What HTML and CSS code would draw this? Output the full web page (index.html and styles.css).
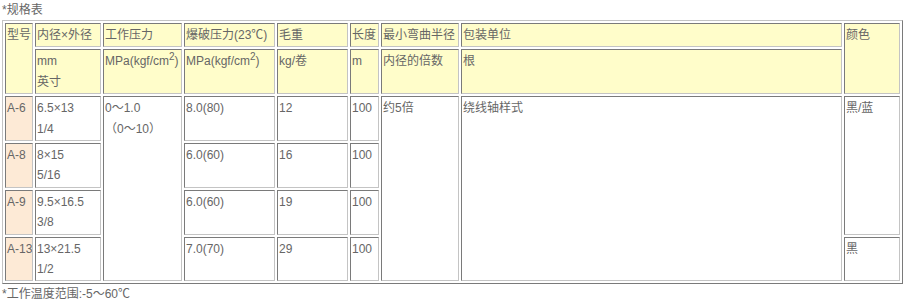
FILE: index.html
```html
<!DOCTYPE html>
<html lang="zh-CN">
<head>
<meta charset="utf-8">
<link rel="stylesheet" href="styles.css">
</head>
<body>
<div class="wrap">
  <div class="note">*规格表</div>
  <table class="spec">
    <tr class="head">
      <td class="w1" rowspan="2">型号</td>
      <td class="w2">内径×外径</td>
      <td class="w3">工作压力</td>
      <td class="w4">爆破压力(23℃)</td>
      <td class="w5">毛重</td>
      <td class="w6">长度</td>
      <td class="w7">最小弯曲半径</td>
      <td class="w8">包装单位</td>
      <td class="w9" rowspan="2">颜色</td>
    </tr>
    <tr class="head">
      <td>mm<br>英寸</td>
      <td>MPa(kgf/cm<sup>2</sup>)</td>
      <td>MPa(kgf/cm<sup>2</sup>)</td>
      <td>kg/卷</td>
      <td>m</td>
      <td>内径的倍数</td>
      <td>根</td>
    </tr>
    <tr>
      <td class="model">A-6</td>
      <td>6.5×13<br>1/4</td>
      <td rowspan="4">0～1.0<br>（0～10）</td>
      <td>8.0(80)</td>
      <td>12</td>
      <td>100</td>
      <td rowspan="4">约5倍</td>
      <td rowspan="4">绕线轴样式</td>
      <td rowspan="3">黑/蓝</td>
    </tr>
    <tr>
      <td class="model">A-8</td>
      <td>8×15<br>5/16</td>
      <td>6.0(60)</td>
      <td>16</td>
      <td>100</td>
    </tr>
    <tr>
      <td class="model">A-9</td>
      <td>9.5×16.5<br>3/8</td>
      <td>6.0(60)</td>
      <td>19</td>
      <td>100</td>
    </tr>
    <tr>
      <td class="model">A-13</td>
      <td>13×21.5<br>1/2</td>
      <td>7.0(70)</td>
      <td>29</td>
      <td>100</td>
      <td>黑</td>
    </tr>
  </table>
  <div class="note">*工作温度范围:-5～60℃</div>
</div>
</body>
</html>
```

FILE: styles.css
```css
html, body {
  margin: 0;
  padding: 0;
  background: #ffffff;
}
body {
  font-family: "Liberation Sans", "Noto Sans CJK SC", sans-serif;
  font-size: 12px;
  line-height: 20.4px;
  color: #666666;
}
.wrap {
  padding-left: 2px;
}
.note {
  height: 20px;
  line-height: 20px;
}
.spec {
  width: 901px;
  table-layout: fixed;
  border-collapse: separate;
  border-spacing: 2px;
  border-style: solid;
  border-width: 1px;
  border-color: #c4c4c4 #7a7a7a #7a7a7a #c4c4c4;
  margin: 0;
}
.spec td {
  box-sizing: border-box;
  padding: 1px;
  vertical-align: top;
  border-style: solid;
  border-width: 1px;
  border-color: #7a7a7a #c4c4c4 #c4c4c4 #7a7a7a;
  line-height: 20.4px;
  background: #ffffff;
  white-space: nowrap;
  overflow: hidden;
}
.spec .head td {
  background: #fffdca;
}
.spec td.model {
  background: #fdead6;
}
.spec sup {
  font-size: 10px;
  line-height: 0;
  vertical-align: 5px;
}
.w1 { width: 28px; }
.w2 { width: 66px; }
.w3 { width: 79px; }
.w4 { width: 91px; }
.w5 { width: 71px; }
.w6 { width: 29px; }
.w7 { width: 78px; }
.w8 { width: 381px; }
.w9 { width: 56px; }
```
